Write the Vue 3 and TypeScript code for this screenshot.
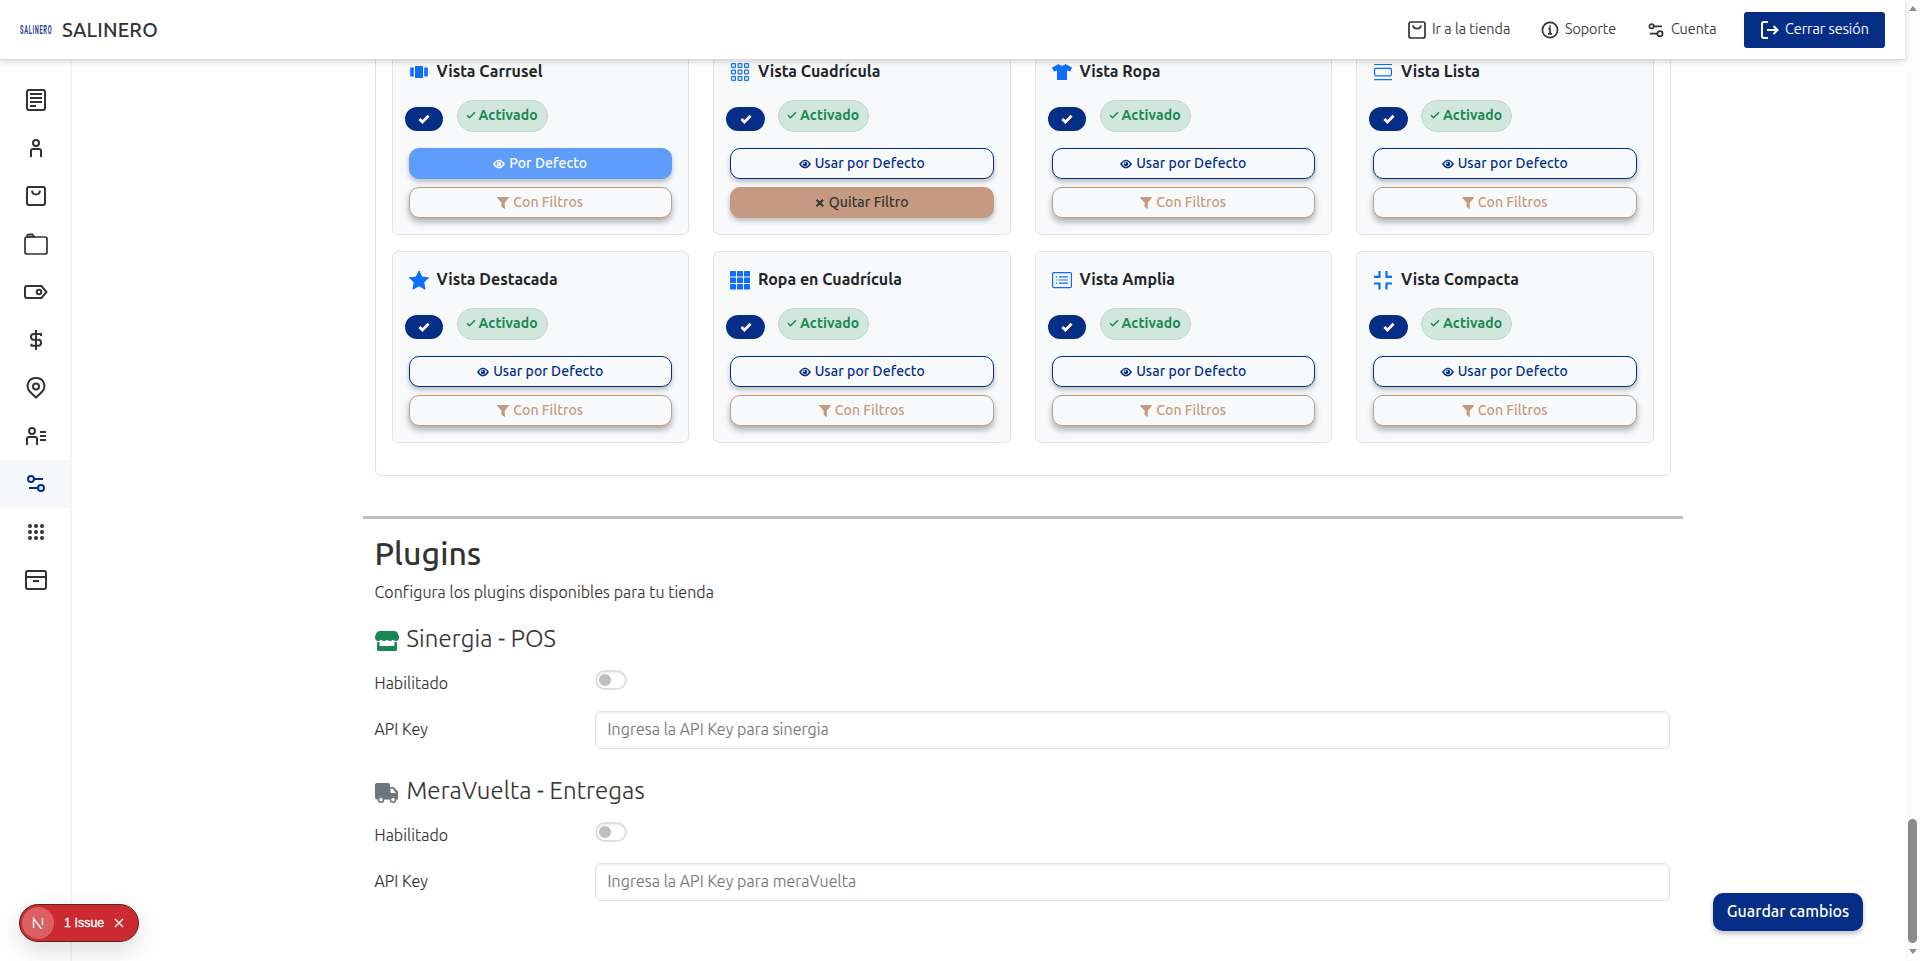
<script setup lang="ts">
interface ViewCard {
  icon: string
  title: string
  isDefault?: boolean
  filtered?: boolean
}

const menu = ['doc', 'person', 'bag', 'folder', 'tag', 'dollar', 'pin', 'contact', 'sliders', 'dots', 'archive']
const activeMenu = 'sliders'

const views: ViewCard[] = [
  { icon: 'carousel', title: 'Vista Carrusel', isDefault: true },
  { icon: 'grid', title: 'Vista Cuadrícula', filtered: true },
  { icon: 'shirt', title: 'Vista Ropa' },
  { icon: 'list', title: 'Vista Lista' },
  { icon: 'star', title: 'Vista Destacada' },
  { icon: 'gridfill', title: 'Ropa en Cuadrícula' },
  { icon: 'card', title: 'Vista Amplia' },
  { icon: 'compress', title: 'Vista Compacta' },
]

const plugins = [
  { id: 'sinergia', icon: 'shop', title: 'Sinergia - POS' },
  { id: 'meraVuelta', icon: 'truck', title: 'MeraVuelta - Entregas' },
]

const cells = [0, 1, 2].flatMap((r) => [0, 1, 2].map((c) => ({ r, c })))
</script>

<template>
  <div class="app">
    <header class="header">
      <div class="brand">
        <div class="logo"><span>SALINERO</span></div>
        <span class="brand-name">SALINERO</span>
      </div>
      <nav class="nav">
        <a class="nav-link store">
          <svg width="18" height="18" viewBox="0 0 18 18" class="line thin"><rect x="1" y="1" width="16" height="16" rx="2" /><path d="M5 4.3c.4 4.3 7.600 4.300 8 0" /></svg>
          Ir a la tienda
        </a>
        <a class="nav-link support">
          <svg width="18" height="18" viewBox="0 0 18 18" class="line thin"><circle cx="9" cy="9" r="7.600" /><path d="M7.300 7.700H9v5M7 12.900h4.200M9 4.600v1.600" /></svg>
          Soporte
        </a>
        <a class="nav-link account">
          <svg width="16" height="16" viewBox="0 0 16 16" class="line thin"><circle cx="3.600" cy="4.300" r="2.200" /><path d="M5.800 4.300H14M2 11.700h7.500" /><circle cx="12" cy="11.700" r="2.600" /></svg>
          Cuenta
        </a>
        <button class="logout">
          <svg width="18" height="18" viewBox="0 0 18 18" class="line"><path d="M7 1H3Q1 1 1 3v12q0 2 2 2h4M6 9h10M12.500 5l4 4-4 4" /></svg>
          Cerrar sesión
        </button>
      </nav>
    </header>

    <div class="body">
      <aside class="sidebar">
        <a v-for="m in menu" :key="m" class="menu-item" :class="{ active: m === activeMenu }">
          <svg width="24" height="24" viewBox="0 0 24 24" class="line">
            <template v-if="m === 'doc'"><rect x="3" y="2" width="18" height="20" rx="2" /><path d="M6 6h12M6 10h12M6 14h12M6 18h6" /></template>
            <template v-else-if="m === 'person'"><circle cx="12" cy="7" r="3" /><path d="M7 21v-6q0-2 2-2h6q2 0 2 2v6" /></template>
            <template v-else-if="m === 'bag'"><rect x="3" y="3" width="18" height="18" rx="2" /><path d="M8 6.500c.5 5.300 7.500 5.300 8 0" /></template>
            <template v-else-if="m === 'folder'"><path d="M3 5V4q0-1.800 1.800-1.800h3.700L10.500 5z" fill="#999" stroke-width="1.500" /><rect x="1" y="5" width="22" height="17" rx="2" stroke-width="1.700" /></template>
            <template v-else-if="m === 'tag'"><path d="M3 6h14.500l5 6-5 6H3q-2 0-2-2V8q0-2 2-2z" /><circle cx="15" cy="12" r="2.300" /></template>
            <template v-else-if="m === 'dollar'"><path d="M12 2v20M17 8V6H9.500Q7 6 7 8.800T9.500 11.800h5q2.500 0 2.500 3t-2.500 3H7.500v-2" /></template>
            <template v-else-if="m === 'pin'"><path d="M12 21.500L5.500 15.200C1.500 10.500 4 2 12 2s10.500 8.500 6.500 13.200z" /><circle cx="12" cy="10.500" r="3" /></template>
            <template v-else-if="m === 'contact'"><circle cx="8" cy="7" r="3" /><path d="M3 21v-6q0-2 2-2h6q2 0 2 2v6M16 8h6M16 12h6M16 16h6" /></template>
            <template v-else-if="m === 'sliders'"><circle cx="7" cy="7" r="3" /><path d="M10 7h9M5 16h9" /><circle cx="17" cy="16" r="3" /></template>
            <template v-else-if="m === 'dots'"><circle v-for="p in cells" :key="`${p.r}${p.c}`" class="dot" :cx="6 + p.c * 6" :cy="6 + p.r * 6" r="2" /></template>
            <template v-else><rect x="2" y="3" width="20" height="18" rx="2" /><path d="M2 9h20M9 13h6" /></template>
          </svg>
        </a>
      </aside>

      <main class="main">
        <section class="panel">
          <article v-for="v in views" :key="v.title" class="card">
            <h6 class="card-title">
              <svg width="20" height="20" viewBox="0 0 20 20" class="blue">
                <template v-if="v.icon === 'carousel'"><rect x="6" y="4" width="8" height="12" rx=".4" /><rect x="1.200" y="5.500" width="3.600" height="9" /><rect x="15.200" y="5.500" width="3.600" height="9" /></template>
                <template v-else-if="v.icon === 'grid'"><rect v-for="p in cells" :key="`${p.r}${p.c}`" class="cell" :x="1.600 + p.c * 6.500" :y="1.600 + p.r * 6.500" width="3.800" height="3.800" rx=".7" /></template>
                <path v-else-if="v.icon === 'shirt'" d="M6.700 2C8 4 12 4 13.300 2L20 5.500 18.200 9.500 15 8.500V18H5V8.500L1.800 9.500 0 5.500z" />
                <g v-else-if="v.icon === 'list'" class="cell"><path d="M1 2.500h18M1 17.700h18" /><rect x="1.600" y="6.300" width="16.800" height="7.500" rx="1.200" /></g>
                <path v-else-if="v.icon === 'star'" d="M10 1l2.900 6.100 6.600.7-4.800 4.700 1.400 6.700L10 15.800l-6.100 3.400 1.400-6.700L.5 7.800l6.600-.7z" stroke="#0d6efd" stroke-linejoin="round" />
                <template v-else-if="v.icon === 'gridfill'"><rect v-for="p in cells" :key="`${p.r}${p.c}`" :x="p.c * 7" :y="1 + p.r * 6.500" width="6" height="5.400" rx=".5" /></template>
                <g v-else-if="v.icon === 'card'" class="cell"><rect x=".6" y="2.600" width="18.800" height="15" rx="1.200" /><path d="M6.500 6.800H16M6.500 10H16M6.500 13.200H16M3.800 6.800h1.200M3.800 10h1.200M3.800 13.200h1.200" /></g>
                <path v-else class="bold" d="M1 6.800h5.500V1M19 6.800h-5.500V1M1 13.500h5.500v6M19 13.500h-5.500v6" />
              </svg>
              {{ v.title }}
            </h6>
            <div class="status">
              <span class="toggle"><svg width="12" height="10" viewBox="0 0 12 10"><path d="M1.400 5l3 3 6.200-6.300" /></svg></span>
              <span class="badge"><svg width="10" height="8" viewBox="0 0 10 8"><path d="M1 4.200l2.500 2.500L9 1.200" /></svg>Activado</span>
            </div>
            <div class="actions">
              <button class="btn" :class="v.isDefault ? 'current' : 'navy'">
                <svg width="12" height="10" viewBox="0 0 12 10"><path d="M.9 5Q6-2.200 11.100 5 6 12.200.9 5z" class="eye" /><circle cx="6" cy="5" r="2.200" fill="currentColor" /><circle cx="5.300" cy="4.200" r=".7" class="glint" /></svg>
                {{ v.isDefault ? 'Por Defecto' : 'Usar por Defecto' }}
              </button>
              <button v-if="v.filtered" class="btn remove">
                <svg width="10" height="10" viewBox="0 0 10 10"><path d="M1.500 1.800l6.600 6.400M8.100 1.800L1.500 8.200" stroke="currentColor" stroke-width="2.100" /></svg>
                Quitar Filtro
              </button>
              <button v-else class="btn filter">
                <svg width="12" height="12" viewBox="0 0 12 12"><path d="M.3 0h11.400v1L7.800 5.800V12L4.600 10V5.800L.3 1z" fill="currentColor" /></svg>
                Con Filtros
              </button>
            </div>
          </article>
        </section>

        <section class="plugins">
          <h2>Plugins</h2>
          <p class="lead">Configura los plugins disponibles para tu tienda</p>
          <div v-for="p in plugins" :key="p.id" class="plugin">
            <h4>
              <svg v-if="p.icon === 'shop'" width="24" height="22" viewBox="0 0 24 22" fill="#198754"><path d="M4 1h16l2.500 1.800L24 6.500v2q-1 2.500-3 2.500-1.600 0-3-1.300Q16.500 11 15 11t-3-1.300Q10.500 11 9 11T6 9.700Q4.600 11 3 11q-2 0-3-2.500v-2l1.500-3.700z" /><path d="M2 12h2.500v4h15v-4H22v7.500q0 1.500-1.500 1.500h-17Q2 21 2 19.500z" /></svg>
              <svg v-else width="24" height="22" viewBox="0 0 24 22" fill="#6c757d"><path fill-rule="evenodd" d="M2 1h11q2 0 2 2v2h3.500L23 9.500v8h-2a3 3 0 0 0-6 0H9a3 3 0 0 0-6 0H2q-2 0-2-2V3q0-2 2-2zm13.500 5.500V11h5.500l-3.500-4.500z" /><path fill-rule="evenodd" d="M6 14.500a3.300 3.300 0 1 1 0 6.600 3.300 3.300 0 0 1 0-6.600zm0 1.500a1.800 1.800 0 1 0 0 3.600 1.800 1.800 0 0 0 0-3.600zM18 14.500a3.300 3.300 0 1 1 0 6.600 3.300 3.300 0 0 1 0-6.600zm0 1.500a1.800 1.800 0 1 0 0 3.600 1.800 1.800 0 0 0 0-3.600z" /></svg>
              {{ p.title }}
            </h4>
            <div class="field enabled"><label>Habilitado</label><span class="switch"></span></div>
            <div class="field"><label>API Key</label><input :placeholder="`Ingresa la API Key para ${p.id}`" /></div>
          </div>
        </section>
      </main>

      <div class="scrollbar">
        <span class="arrow up"></span>
        <span class="thumb"></span>
        <span class="arrow down"></span>
      </div>
    </div>

    <button class="save">Guardar cambios</button>
    <div class="issue">
      <span class="issue-mark"><svg width="12" height="12" viewBox="0 0 12 12"><path d="M1.500 11V1.500L9.500 12M10.500 1v7" /></svg></span>
      <span>1 Issue</span>
      <svg width="10" height="10" viewBox="0 0 10 10"><path d="M1 1l8 8M9 1L1 9" /></svg>
    </div>
  </div>
</template>

<style>
body { margin: 0; overflow: hidden; }
</style>

<style scoped>
* { box-sizing: border-box; }
.app { position: relative; width: 1920px; height: 961px; overflow: hidden; display: flex; flex-direction: column; background: #fff; color: #333; font: 300 16px/24px Ubuntu, "Noto Sans", sans-serif; }
button, input { font: inherit; color: inherit; margin: 0; }
svg { display: block; flex: none; }
.line { fill: none; stroke: currentColor; stroke-width: 2; }
.thin { stroke-width: 1.700; }
.dot { fill: currentColor; stroke: none; }

.header { position: relative; z-index: 2; flex: none; width: 1905px; height: 60px; padding: 0 20px; display: flex; align-items: center; justify-content: space-between; background: #fff; border-bottom: 1px solid #dcdcdf; box-shadow: 0 2px 6px rgba(0, 0, 0, .16); }
.brand { display: flex; align-items: center; gap: 10px; }
.logo { width: 32px; font: 700 12.500px/16px Roboto, sans-serif; letter-spacing: 1.500px; color: #1f3f94; }
.logo span { display: inline-block; transform: scaleX(.455); transform-origin: left; }
.brand-name { font-size: 20px; font-weight: 500; letter-spacing: .15px; }
.nav { display: flex; align-items: center; font-size: 14.400px; -webkit-text-stroke: .15px currentColor; }
.nav-link { display: flex; align-items: center; gap: 6px; white-space: nowrap; height: 24px; padding-bottom: 1px; }
.nav-link svg { margin-top: 1px; }
.store { width: 133px; letter-spacing: .05px; }
.support { width: 107px; }
.account { width: 96px; gap: 7px; }
.logout { width: 141px; height: 36px; padding: 0 0 1px 17px; display: flex; align-items: center; gap: 6px; border: 0; border-radius: 3px; background: #062e87; color: #fff; white-space: nowrap; letter-spacing: .05px; }
.logout svg { margin-top: 1px; }

.body { flex: 1; min-height: 0; display: flex; }
.sidebar { width: 72px; flex: none; padding-top: 16px; border-right: 2px solid #f5f5f5; }
.menu-item { height: 48px; padding-left: 24px; display: flex; align-items: center; }
.menu-item.active { background: #f5f7fb; color: #062e87; }

.main { flex: 1; min-width: 0; padding-left: 302.500px; display: flex; flex-direction: column; align-items: flex-start; overflow: hidden; }
.panel { flex: none; width: 1296px; margin-top: -34px; padding: 16px 16px 32px; display: grid; grid-template-columns: repeat(4, 1fr); gap: 16px 24px; border: 1px solid #dee2e6; border-radius: 6px; }
.card { height: 192px; padding: 16px; display: flex; flex-direction: column; border: 1px solid #dee2e6; border-radius: 6px; background: #f8f9fa; }
.card-title { height: 24px; margin: 0; padding-bottom: 2px; display: flex; align-items: center; gap: 8px; color: #212529; font-size: 16px; font-weight: 600; }
.card-title svg { margin-top: 2px; }
.blue { fill: #0d6efd; }
.cell { fill: none; stroke: #0d6efd; stroke-width: 1.200; }
.bold { fill: none; stroke: #0d6efd; stroke-width: 2.200; }
.status { height: 32px; margin: 16px 0; display: flex; align-items: flex-end; gap: 13.500px; }
.toggle { width: 38.500px; height: 24.500px; margin: 0 0 .6px -4px; padding-left: 1px; display: flex; align-items: center; justify-content: center; border-radius: 12.500px; background: #062e87; }
.toggle svg { fill: none; stroke: #fff; stroke-width: 2.700; }
.badge { width: 91px; height: 32px; padding: 0 0 2px 8px; display: flex; align-items: center; gap: 3px; border: 1px solid #badbcc; border-radius: 16px; background: #d1e7dd; color: #198754; font-size: 14px; font-weight: 700; letter-spacing: .15px; }
.badge svg { fill: none; stroke: currentColor; stroke-width: 1.500; }
.actions { display: grid; gap: 8px; }
.btn { width: 100%; height: 31px; padding: 0 0 1px; display: flex; align-items: center; justify-content: center; gap: 4px; border: 1px solid; border-radius: 10px; background: #f8f9fa; font-size: 14px; line-height: 21px; font-weight: 500; letter-spacing: .06px; box-shadow: 0 3px 5px rgba(0, 0, 0, .25); }
.btn svg { margin-top: 1px; }
.eye { fill: none; stroke: currentColor; stroke-width: 1.400; }
.glint { fill: #f8f9fa; }
.navy { color: #062e87; }
.current { border-color: #5f9dfd; background: #5f9dfd; color: #fff; }
.current .glint { fill: #5f9dfd; }
.filter { color: #c69a80; box-shadow: 0 4px 6px rgba(0, 0, 0, .3); }
.remove { border-color: #c69a80; background: #c69a80; color: #333; }

.plugins { width: 1320px; margin: 40px 0 0 -12px; padding: 15px 12px 0; border-top: 3px solid #bfbfbf; letter-spacing: .08px; -webkit-text-stroke: .15px currentColor; }
h2 { margin: 0 0 8px; font-size: 32px; line-height: 38px; font-weight: 500; letter-spacing: 0; -webkit-text-stroke: 0; }
.lead { margin: 0 0 21px; }
.plugin { height: 152px; }
h4 { height: 29px; margin: 0 0 16px; padding-bottom: 2px; display: flex; align-items: center; gap: 8px; font-size: 24px; line-height: 27px; font-weight: 300; letter-spacing: .12px; }
h4 svg { margin-top: 5px; }
.field { height: 38px; display: flex; align-items: center; }
.enabled { height: 31px; margin-bottom: 10px; align-items: flex-start; }
.field label { width: 220px; padding-bottom: 2px; }
.enabled label { padding-top: 1px; }
.field input { width: 1075px; height: 38px; padding: 5px 12px 7px; border: 1px solid #dee2e6; border-radius: 6px; outline: 0; background: #fff; letter-spacing: .1px; box-shadow: inset 0 1px 2px rgba(0, 0, 0, .075); }
.field input::placeholder { color: #757575; opacity: 1; }
.switch { width: 32px; height: 20px; padding: 2px; border: 2px solid #dedee4; border-radius: 10px; box-shadow: inset 0 1px 2px rgba(0, 0, 0, .075); }
.switch::before { content: ""; display: block; width: 12px; height: 12px; border-radius: 50%; background: #bfbfbf; }

.scrollbar { width: 15px; flex: none; margin-top: -60px; padding-top: 6px; display: flex; flex-direction: column; align-items: center; background: #fcfcfc; }
.arrow { border: 4.500px solid transparent; }
.up { border-top: 0; border-bottom: 5px solid #8b8b8b; }
.down { margin-top: 6px; border-bottom: 0; border-top: 5px solid #8b8b8b; }
.thumb { width: 9px; height: 124px; margin-top: 808px; border-radius: 4.500px; background: #8b8b8b; }

.save { position: absolute; left: 1713px; top: 893px; width: 150px; height: 38px; padding: 0 0 2px; border: 0; border-radius: 10px; background: #062e87; color: #fff; font-weight: 500; box-shadow: 0 3px 5px rgba(0, 0, 0, .25); }
.issue { position: absolute; left: 19px; top: 904px; width: 120px; height: 38px; padding-left: 2px; display: flex; align-items: center; gap: 10px; border: 1px solid #5e2325; border-radius: 19px; background: #ca2a30; color: #fff; font: 600 12.500px "Liberation Sans", Inter, sans-serif; font-weight: 500; -webkit-text-stroke: .3px #fff; word-spacing: 0; box-shadow: 0 8px 22px rgba(0, 0, 0, .14); }
.issue svg { fill: none; stroke: #fff; stroke-width: 1.300; }
.issue-mark { width: 32px; height: 32px; display: flex; align-items: center; justify-content: center; border-radius: 50%; background: #da6064; }
</style>
